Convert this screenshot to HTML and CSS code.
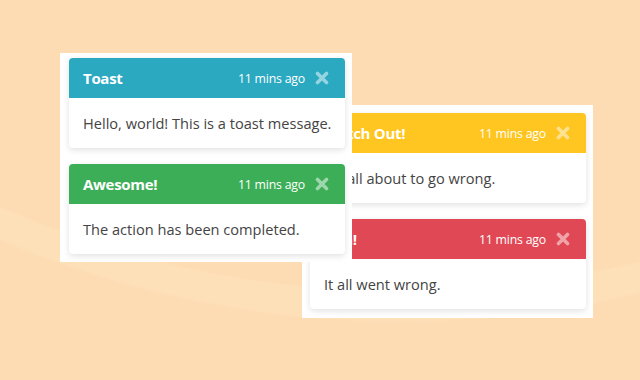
FILE: index.html
```html
<!DOCTYPE html>
<html lang="en">
<head>
    <meta charset="UTF-8">
    <meta name="viewport" content="width=device-width, initial-scale=1.0">
    <title>Toasts</title>
    <link rel="stylesheet" href="styles.css">
</head>
<body>
    <div class="stage">
        <div class="panel panel-front">
            <div class="toast">
                <div class="toast-header info">
                    <strong class="toast-title">Toast</strong>
                    <small class="toast-time">11 mins ago</small>
                    <button class="toast-close" aria-label="Close">
                        <svg viewBox="0 0 14 14" width="14" height="14"><path d="M2.5 2.5L11.5 11.5M11.5 2.5L2.5 11.5"/></svg>
                    </button>
                </div>
                <div class="toast-body">Hello, world! This is a toast message.</div>
            </div>
            <div class="toast">
                <div class="toast-header success">
                    <strong class="toast-title">Awesome!</strong>
                    <small class="toast-time">11 mins ago</small>
                    <button class="toast-close" aria-label="Close">
                        <svg viewBox="0 0 14 14" width="14" height="14"><path d="M2.5 2.5L11.5 11.5M11.5 2.5L2.5 11.5"/></svg>
                    </button>
                </div>
                <div class="toast-body">The action has been completed.</div>
            </div>
        </div>

        <div class="panel panel-back">
            <div class="toast">
                <div class="toast-header warning">
                    <strong class="toast-title">Watch Out!</strong>
                    <small class="toast-time">11 mins ago</small>
                    <button class="toast-close" aria-label="Close">
                        <svg viewBox="0 0 14 14" width="14" height="14"><path d="M2.5 2.5L11.5 11.5M11.5 2.5L2.5 11.5"/></svg>
                    </button>
                </div>
                <div class="toast-body">It's all about to go wrong.</div>
            </div>
            <div class="toast">
                <div class="toast-header danger">
                    <strong class="toast-title">Ugh!</strong>
                    <small class="toast-time">11 mins ago</small>
                    <button class="toast-close" aria-label="Close">
                        <svg viewBox="0 0 14 14" width="14" height="14"><path d="M2.5 2.5L11.5 11.5M11.5 2.5L2.5 11.5"/></svg>
                    </button>
                </div>
                <div class="toast-body">It all went wrong.</div>
            </div>
        </div>
    </div>
</body>
</html>
```

FILE: styles.css
```css
html, body {
    height: 100%;
}
body {
    margin: 0;
    font-family: 'Open Sans', 'Noto Sans', sans-serif;
    background-color: #fddcb3;
    background-image: radial-gradient(circle 1000px at 400px -700px, #fddcb3 99%, #fddfb8 99.2%, #fddfb8 102%, #fddcb3 102.3%);
    color: #444;
}
.stage {
    display: flex;
    align-items: flex-start;
    padding: 53px 0 0 60px;
}
.panel {
    background-color: #fff;
    display: flex;
    flex-direction: column;
    gap: 16px;
}
.panel-front {
    position: relative;
    z-index: 2;
    width: 276px;
    padding: 5px 7px 8px 9px;
}
.panel-back {
    position: relative;
    z-index: 1;
    width: 276px;
    margin: 52px 0 0 -50px;
    padding: 8px 7px 9px 8px;
}
.toast {
    background-color: #fff;
    border-radius: 4px;
    overflow: hidden;
    box-shadow: 0 2px 6px rgba(0, 0, 0, 0.12);
}
.toast-header {
    display: flex;
    align-items: center;
    height: 40px;
    padding: 0 16px 0 14px;
    color: #fff;
}
.toast-header.info { background-color: #2aa9c1; }
.toast-header.success { background-color: #3cae57; }
.toast-header.warning { background-color: #ffc520; }
.toast-header.danger { background-color: #e04855; }
.toast-title {
    flex: 1;
    font-size: 15px;
    font-weight: 700;
    letter-spacing: -0.3px;
}
.toast-time {
    font-size: 12.3px;
    letter-spacing: -0.2px;
}
.toast-close {
    display: flex;
    margin-left: 10px;
    padding: 0;
    border: none;
    background: none;
    cursor: pointer;
}
.toast-close path {
    fill: none;
    stroke: rgba(255, 255, 255, 0.5);
    stroke-width: 3.6;
    stroke-linecap: round;
}
.toast-body {
    height: 50px;
    display: flex;
    align-items: center;
    padding: 0 0 0 14px;
    font-size: 14.6px;
    white-space: nowrap;
}
```
